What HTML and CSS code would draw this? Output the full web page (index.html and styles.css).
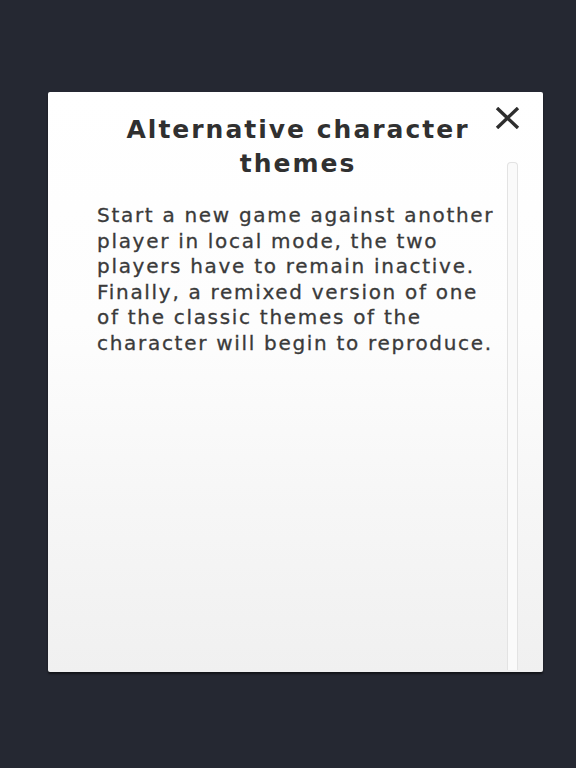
FILE: index.html
```html
<!DOCTYPE html>
<html lang="en">
<head>
    <meta charset="UTF-8">
    <meta name="viewport" content="width=device-width, initial-scale=1.0">
    <title>Alternative character themes</title>
    <link rel="stylesheet" href="styles.css">
</head>
<body>
    <div class="dialog">
        <button class="close" aria-label="Close">
            <svg width="25" height="22" viewBox="0 0 25 22">
                <path d="M2 1 L23 21 M23 1 L2 21" stroke="#2e2e2e" stroke-width="3.4" fill="none"/>
            </svg>
        </button>
        <h1>Alternative character themes</h1>
        <p class="text">Start a new game against another player in local mode, the two players have to remain inactive. Finally, a remixed version of one of the classic themes of the character will begin to reproduce.</p>
        <div class="track"></div>
    </div>
</body>
</html>
```

FILE: styles.css
```css
html, body {
    height: 100%;
}
body {
    margin: 0;
    padding: 92px 33px 0 48px;
    box-sizing: border-box;
    background-color: #252832;
    font-family: "DejaVu Sans", sans-serif;
}
.dialog {
    position: relative;
    width: 495px;
    height: 580px;
    box-sizing: border-box;
    padding: 21px 46px 0 49px;
    background: linear-gradient(#ffffff, #fdfdfd 40%, #f0f0f0);
    border-radius: 2px;
    box-shadow: 0 2px 2px rgba(0,0,0,0.5);
}
h1 {
    margin: 0;
    padding: 0 20px 0 22px;
    text-align: center;
    font-weight: bold;
    font-size: 25px;
    line-height: 34px;
    letter-spacing: 2px;
    color: #303030;
}
.text {
    margin: 22px 0 0 0;
    font-size: 20px;
    line-height: 25.5px;
    letter-spacing: 1.7px;
    color: #3a3a3a;
    -webkit-text-stroke: 0.3px #3a3a3a;
}
.close {
    position: absolute;
    top: 15px;
    right: 23px;
    padding: 0;
    border: none;
    background: none;
    line-height: 0;
}
.track {
    position: absolute;
    top: 70px;
    bottom: 2px;
    right: 25px;
    width: 9px;
    border: 1px solid #e3e3e3;
    border-bottom: none;
    border-radius: 4px 4px 0 0;
    background: #fafafa;
}
```
